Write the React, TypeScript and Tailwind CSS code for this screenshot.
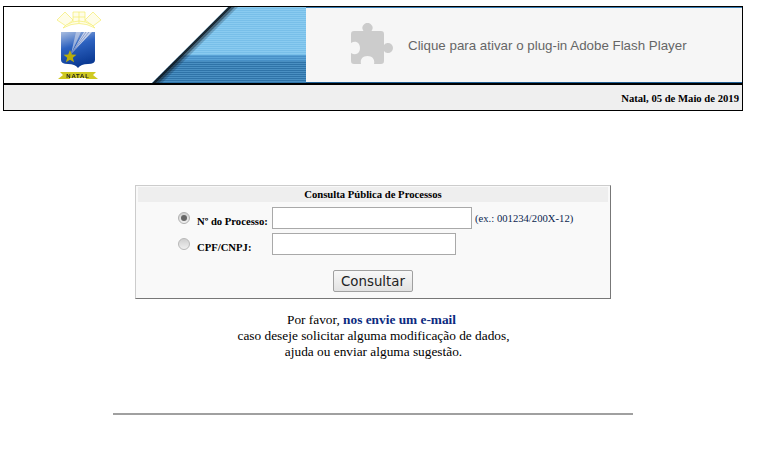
export default function App() {
  const stripes = Array.from({ length: 38 }, (_, i) => i);
  return (
    <div className="w-[784px] h-[471px] overflow-hidden bg-white font-['Liberation_Serif',serif] text-black">
      <div className="ml-[3px] mt-[6px] w-[740px] h-[105px] border border-black flex flex-col">
        <div className="flex h-[76px] bg-white">
          <div className="w-[148px] flex justify-center pr-[2px]">
            <svg width="60" height="76" viewBox="47 7 60 76" className="blur-[0.4px]">
              <defs>
                <linearGradient id="sh" x1="0" y1="0" x2="0.3" y2="1">
                  <stop offset="0" stopColor="#a9bde0" />
                  <stop offset="0.45" stopColor="#2d62c0" />
                  <stop offset="1" stopColor="#0b3a94" />
                </linearGradient>
              </defs>
              <g fill="#fffde8" stroke="#f3ec6e" strokeWidth="0.7">
                <path d="M57 20 L65 12 L73 20 L66 26 Z" />
                <path d="M73 12 H85 V23 H73 Z" />
                <path d="M85 20 L93 12 L101 20 L93 26 Z" />
                <path d="M63 28 Q79 19 95 28 L92 25 Q79 17 66 25 Z" />
                <path d="M73 17 H85 M79 12 V23" fill="none" />
              </g>
              <path d="M61 32 H95 V60 Q95 64 88 64 Q81 64 78 68 Q75 64 68 64 Q61 64 61 60 Z" fill="url(#sh)" />
              <path d="M71 54 L84 32 H92 Z" fill="#dfe4f2" opacity="0.85" />
              <path d="M76 32 L71 54 L81 32 Z" fill="#c5cfe6" opacity="0.7" />
              <path d="M86 32 L71 54 M89 32 L71 54" stroke="#5f78b6" strokeWidth="0.6" />
              <polygon points="70,50 71.8,54.6 76.5,54.8 72.8,57.8 74.1,62.3 70,59.7 65.9,62.3 67.2,57.8 63.5,54.8 68.2,54.6" fill="#b9ae0a" />
              <path d="M58 79 L63 75 L60 72 H96 L93 75 L98 79 H86 V78 H70 V79 Z" fill="#cfc922" />
              <text x="78" y="77.5" textAnchor="middle" fontSize="6" fontWeight="700" fontFamily="Liberation Sans, sans-serif" letterSpacing="0.8" fill="#222">NATAL</text>
            </svg>
          </div>
          <svg width="154" height="76" viewBox="152 7 154 76" className="shrink-0">
            <defs>
              <clipPath id="dg"><polygon points="228,7 306,7 306,83 152,83" /></clipPath>
            </defs>
            <g clipPath="url(#dg)">
              {stripes.map((i) => {
                const y = 7 + i * 2;
                const lower = y >= 55;
                const t = (y - 55) / 28;
                const a = lower ? (t < 0.2 ? "#5aa3d6" : "#4a8fc2") : "#8acbf0";
                const b = lower ? (t < 0.2 ? "#478fc6" : "#2f73a8") : "#78bfe9";
                return (
                  <g key={i}>
                    <rect x="150" y={y} width="157" height="1" fill={a} />
                    <rect x="150" y={y + 1} width="157" height="1" fill={b} />
                  </g>
                );
              })}
              <polygon points="228,7 232,7 156,83 152,83" fill="#10181f" opacity="0.9" />
              <polygon points="232,7 235,7 159,83 156,83" fill="#10181f" opacity="0.55" />
              <polygon points="235,7 238,7 162,83 159,83" fill="#10181f" opacity="0.22" />
            </g>
          </svg>
          <div className="flex-1 bg-[#f6f6f6] border-t border-t-[#3b7fb5] border-b border-b-[#1f5f95] flex items-center pl-[45px] gap-[14px]">
            <svg width="43" height="42" viewBox="0 0 43 42" className="shrink-0 mb-[2px]">
              <path
                d="M3 8 H12.5 A5 5 0 1 1 20.5 8 H30 Q33 8 33 11 V22 A5 5 0 1 1 33 28 V38 Q33 41 30 41 H23 C24 37 22 33 16.5 33 C11 33 9 37 10 41 H3 Q0 41 0 38 V30 C5 33 9 30 9 25 C9 20 5 17 0 20 V11 Q0 8 3 8 Z"
                fill="#cccccc"
              />
            </svg>
            <span className="font-['Liberation_Sans',sans-serif] text-[13.33px] text-[#666666] mt-[2px]">Clique para ativar o plug-in Adobe Flash Player</span>
          </div>
        </div>
        <div className="h-[2px] bg-black" />
        <div className="flex-1 bg-[#efefef] flex items-center justify-end pr-[3px] pt-[1px] text-[10.67px] font-bold leading-none">
          Natal, 05 de Maio de 2019
        </div>
      </div>

      <div className="ml-[135px] mt-[74px] w-[476px] h-[114px] border border-[#cccccc] border-r-[#777777] border-b-[#777777] bg-[#f9f9f9] px-[2px] pt-[1px]">
        <div className="h-[15px] bg-[#eeeeee] flex items-center justify-center text-[10.67px] font-bold leading-none">
          Consulta Pública de Processos
        </div>
        <div className="mt-[5px] flex flex-col gap-[4px] pl-[40px]">
          <div className="flex items-center h-[22px]">
            <span className="size-[12px] rounded-full border border-[#b0b0b0] bg-gradient-to-b from-[#cfcfcf] to-[#f0f0f0] flex items-center justify-center shrink-0">
              <span className="size-[6px] rounded-full bg-[#666666]" />
            </span>
            <label className="ml-[7px] w-[75px] text-[10.67px] font-bold whitespace-nowrap leading-none mt-[6px]">Nº do Processo:</label>
            <div className="w-[200px] h-[22px] border border-[#a9a9a9] bg-white" />
            <span className="ml-[3px] mt-[1px] text-[10.67px] text-[#0b1f4f] whitespace-nowrap leading-none">(ex.: 001234/200X-12)</span>
          </div>
          <div className="flex items-center h-[22px]">
            <span className="size-[12px] rounded-full border border-[#b8b8b8] bg-gradient-to-b from-[#cfcfcf] to-[#f0f0f0] shrink-0" />
            <label className="ml-[7px] w-[75px] text-[10.67px] font-bold whitespace-nowrap leading-none mt-[6px]">CPF/CNPJ:</label>
            <div className="w-[184px] h-[22px] border border-[#a9a9a9] bg-white" />
          </div>
        </div>
        <div className="mt-[15px] flex justify-start pl-[195px]">
          <button className="w-[80px] h-[22px] pt-[1px] rounded-[2px] border border-[#a0a0a0] bg-gradient-to-b from-[#f8f8f8] to-[#e2e2e2] font-['DejaVu_Sans',sans-serif] text-[13.33px] text-[#222222] leading-none">
            Consultar
          </button>
        </div>
      </div>

      <div className="w-[747px] mt-[13px] text-center text-[13.33px] leading-[16px]">
        <p className="pr-[4px]">Por favor, <span className="font-bold text-[#0b2a80]">nos envie um e-mail</span></p>
        <p>caso deseje solicitar alguma modificação de dados,</p>
        <p>ajuda ou enviar alguma sugestão.</p>
      </div>

      <div className="ml-[113px] mt-[53px] w-[520px] h-[2px] bg-[#a0a0a0]" />
    </div>
  );
}
